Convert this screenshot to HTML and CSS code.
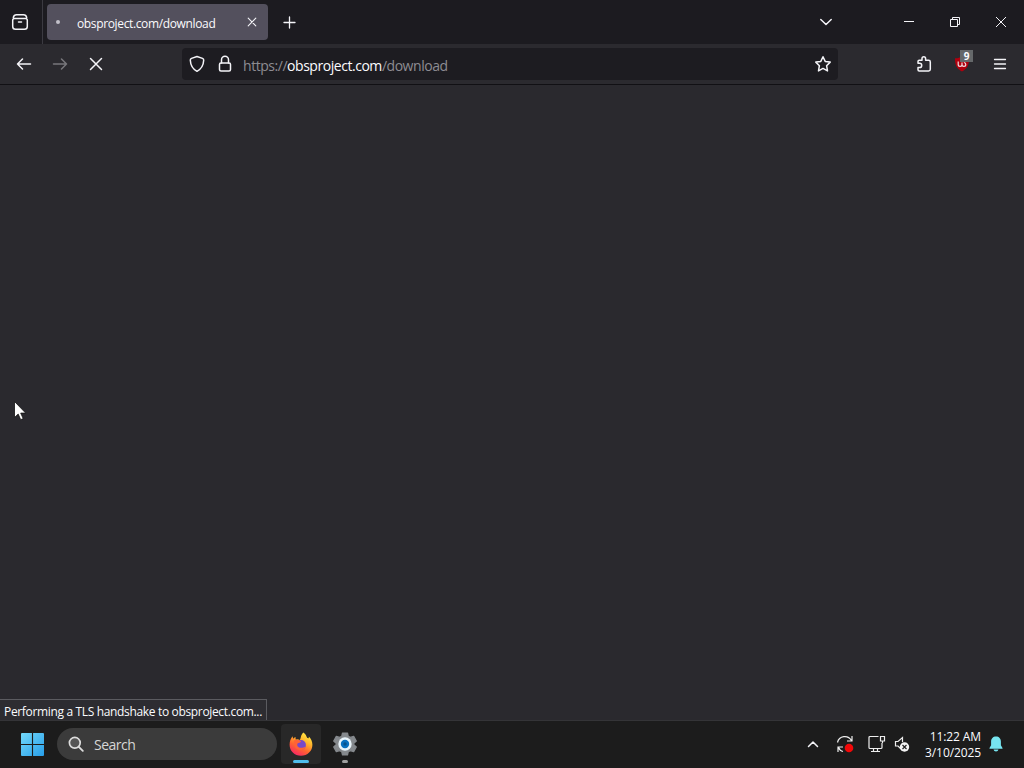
FILE: index.html
```html
<!DOCTYPE html>
<html lang="en">
<head>
<meta charset="utf-8">
<title>obsproject.com/download</title>
<link rel="stylesheet" href="styles.css">
</head>
<body>
<div class="desktop">
  <header class="tabbar">
    <div class="view"><svg width="18" height="18" viewBox="0 0 18 18" class="line"><path d="M2.300 4.500Q3 1.800 5.500 1.800h7q2.500 0 3.200 2.700M3.500 5.500h11a1.800 1.800 0 0 1 1.800 1.800v6.100a2.800 2.800 0 0 1-2.800 2.800h-9a2.800 2.800 0 0 1-2.800-2.800V7.300a1.800 1.800 0 0 1 1.800-1.800zM7.500 9h3"/></svg></div>
    <div class="tab">
      <span class="throbber"></span>
      <span class="tab-title">obsproject.com/download</span>
      <svg width="10" height="10" viewBox="0 0 10 10" class="line tab-close"><path d="M1.200 1.200l7.600 7.600M8.800 1.200L1.200 8.800"/></svg>
    </div>
    <div class="newtab"><svg width="13" height="13" viewBox="0 0 13 13" class="line thin"><path d="M6.500 1v11M1 6.500h11"/></svg></div>
    <div class="window-buttons">
      <div class="alltabs"><svg width="14" height="8" viewBox="0 0 14 8" class="line"><path d="M1.800 1.500L7 6.500l5.200-5"/></svg></div>
      <div class="winbtn"><svg width="10" height="10" viewBox="0 0 10 10" class="line fine"><path d="M0 4.500h10"/></svg></div>
      <div class="winbtn"><svg width="10" height="10" viewBox="0 0 10 10" class="line fine"><path d="M.5 2.500h7v7h-7zM2.500 2.500v-2h7v7h-2"/></svg></div>
      <div class="winbtn"><svg width="12" height="12" viewBox="0 0 12 12" class="line fine"><path d="M1 1l10 10M11 1L1 11"/></svg></div>
    </div>
  </header>
  <nav class="navbar">
    <div class="navbtn"><svg width="16" height="14" viewBox="0 0 16 14" class="line"><path d="M14.500 7H1.500M6.500 2l-5 5 5 5"/></svg></div>
    <div class="navbtn dim"><svg width="16" height="14" viewBox="0 0 16 14" class="line"><path d="M1.500 7h13M9.500 2l5 5-5 5"/></svg></div>
    <div class="navbtn"><svg width="14" height="14" viewBox="0 0 14 14" class="line"><path d="M1.500 1.500l11 11M12.500 1.500l-11 11"/></svg></div>
    <div class="urlbar">
      <svg width="16" height="18" viewBox="0 0 16 18" class="line"><path d="M8 1.500l5.500 1.900q1.300.5 1.200 1.900C14.400 11 12.500 14 8 16.300 3.500 14 1.600 11 1.300 5.300q-.1-1.400 1.200-1.900z"/></svg>
      <svg width="14" height="18" viewBox="0 0 14 18" class="line lock"><rect x="1.500" y="8" width="11" height="8" rx="1.500"/><path d="M3.500 8V4.800a3.500 3.500 0 0 1 7 0V8"/></svg>
      <span class="url">https://<b>obsproject.com</b>/download</span>
      <svg width="18" height="18" viewBox="0 0 18 18" class="line star"><path d="M9 1.700l2.200 4.700 5 .7-3.600 3.600.9 5.200L9 13.400l-4.500 2.500.9-5.200L1.800 7.100l5-.7z"/></svg>
    </div>
    <div class="tools">
      <div class="tool"><svg width="16" height="18" viewBox="0 0 16 18" class="line"><path d="M2 8.300V6.500Q2 5.300 3.200 5.300H6V3.500a1.800 1.800 0 0 1 3.600 0v1.800h3q1.700 0 1.700 1.700v7.300q0 1.700-1.700 1.700H3.200Q2 16 2 14.800v-2.300h1.600a2.100 2.100 0 0 0 0-4.200z"/></svg></div>
      <div class="tool ublock"><svg width="16" height="16" viewBox="0 0 16 16"><path d="M8 0q3 2.300 7 2.300c.2 7-2 10.700-7 13.200C3 13 .8 9.300 1 2.300 4.500 2.300 6 1.500 8 0z" fill="#b0000e"/><path d="M4.200 5.500v3q0 1.900 1.900 1.900T8 8.500v-2m0 2q0 1.900 1.900 1.900t1.900-1.900-1.900-2" fill="none" stroke="#eedfe1" stroke-width="1.200"/></svg><span class="badge">9</span></div>
      <div class="tool"><svg width="14" height="12" viewBox="0 0 14 12" class="line menu"><path d="M1.500 1.500h11M1.500 6h11M1.500 10.500h11"/></svg></div>
    </div>
  </nav>
  <main class="page">
    <svg class="cursor" width="13" height="20" viewBox="0 0 13 20"><path d="M.5.500v16l3.700-3.400 2.500 5.600 2.500-1.100-2.500-5.500h5z" fill="#fff" stroke="#111" stroke-width=".8"/></svg>
    <div class="status"><span>Performing a TLS handshake to obsproject.com...</span></div>
  </main>
  <footer class="taskbar">
    <svg class="start" width="23" height="23" viewBox="0 0 24 24"><defs><linearGradient id="win" x2="1" y2="1"><stop stop-color="#73d9fa"/><stop offset="1" stop-color="#279ee9"/></linearGradient></defs><path fill="url(#win)" d="M0 1q0-1 1-1h10.400v11.400H0zM12.600 0H23q1 0 1 1v10.400H12.600zM0 12.600h11.400V24H1q-1 0-1-1zM12.600 12.600H24V23q0 1-1 1H12.600z"/></svg>
    <div class="search">
      <svg width="16" height="16" viewBox="0 0 16 16"><circle cx="6.800" cy="6.800" r="5.400" fill="#555" stroke="#ddd" stroke-width="1.700"/><path d="M10.800 10.800l4 4" stroke="#ddd" stroke-width="1.900" stroke-linecap="round"/></svg>
      <span class="search-text">Search</span>
    </div>
    <div class="app active">
      <svg width="24" height="24" viewBox="0 0 24 24"><defs><linearGradient id="fx" x1=".8" y1="0" x2=".25" y2="1"><stop stop-color="#fff247"/><stop offset=".35" stop-color="#ffb52c"/><stop offset=".65" stop-color="#ff642f"/><stop offset="1" stop-color="#f52268"/></linearGradient></defs><path fill="url(#fx)" d="M14.300.5c2.500 1.700 3 3.400 3.800 5.300.6.500 1.400.7 1.600.2.200-.4.200-1 .1-1.500 2.300 2.200 3.600 5 3.600 8.200C23.400 19 18.500 23.700 12 23.700S.600 19 .6 12.700c0-3.700 1.100-6.200 3-8.500l.5 2.500Q5 5.500 6.500 5l.2 2.500q2.500-.5 4.200.6c1.300-2.700.7-5 3.400-7.600z"/><circle cx="12" cy="13" r="4.900" fill="#7649c9"/><path d="M4.800 8.500q4-2 7.300.7c-.7 1.500-2.500 1.600-3.600 2.300-.9 2.500.7 4.400 3.800 4.300 2 0 2.800-1.200 4.200-.8-1.300 3-5 4.200-7.800 2.500-3.500-2-4.300-5.600-3.900-9z" fill="#ff6335"/></svg>
      <span class="running"></span>
    </div>
    <div class="app">
      <svg width="24" height="24" viewBox="0 0 24 24"><path fill="#85898d" stroke="#85898d" stroke-width="1.200" stroke-linejoin="round" d="M9.500 1h5l.8 3.300 2 1.100 3.400-1 2.600 4.600-2.500 2.300v1.400l2.500 2.300-2.600 4.600-3.400-1-2 1.100-.8 3.300h-5l-.8-3.300-2-1.100-3.400 1L.7 15l2.500-2.300v-1.400L.7 9l2.600-4.600 3.400 1 2-1.100z"/><circle cx="12" cy="12" r="6.700" fill="#e9f4fa"/><circle cx="12" cy="12" r="4.200" fill="#0870bf"/><circle cx="12" cy="12" r="1.700" fill="#07528d"/></svg>
      <span class="running idle"></span>
    </div>
    <div class="tray">
      <svg width="12" height="8" viewBox="0 0 12 8" class="line"><path d="M1.500 6.500L6 2l4.500 4.500"/></svg>
      <svg class="sync" width="18" height="18" viewBox="0 0 18 18"><path class="stroke" d="M1.500 7.500C3 .5 12-.5 15.500 5.500M16 1v5h-5M7 16.500q-3-.6-4.500-4M2 17v-5h5"/><circle cx="13" cy="13" r="4.300" fill="#f20808"/></svg>
      <svg class="network" width="17" height="18" viewBox="0 0 17 18"><path class="stroke" d="M10.500 1.500H2q-1 0-1 1v10q0 1 1 1h11q1 0 1-1V8M5.500 13.500v3M9.500 13.500v3M3 16.500h9M12.500 1.500h4v4.500h-4zM14.500 6v2"/></svg>
      <svg class="sound" width="16" height="16" viewBox="0 0 16 16"><path class="stroke" d="M7 13L4 10H1.500V5.500H4L8.500 1.500V6"/><circle cx="10.500" cy="11" r="4.700" fill="#f4f4f4"/><path d="M8.500 9l4 4m0-4l-4 4" stroke="#222" stroke-width="1.200"/></svg>
      <div class="clock"><span class="time">11:22 AM</span><span class="date">3/10/2025</span></div>
      <svg class="bell" width="14" height="16" viewBox="0 0 14 16"><path fill="#77e5f0" d="M7 .5c3 0 4.900 2.100 4.900 5v3.700L13.500 12v.8H.5V12l1.600-2.800V5.500C2.100 2.600 4 .5 7 .5zM4.500 13.600h5Q9 15.600 7 15.600t-2.500-2z"/></svg>
    </div>
  </footer>
</div>
</body>
</html>
```
FILE: styles.css
```css
* { box-sizing: border-box; }
body { margin: 0; font-family: "Open Sans", "Noto Sans", sans-serif; color: #fbfbfe; background: #2a292e; }
svg { display: block; flex: none; overflow: visible; }
.line { fill: none; stroke: #f4f4f8; stroke-width: 1.5; stroke-linecap: round; stroke-linejoin: round; }
.thin { stroke-width: 1.3; }
.tab-close { stroke-width: 1.1; }
.menu { stroke-width: 1.3; }
.fine { stroke-width: 1; stroke-linecap: butt; stroke-linejoin: miter; }
.desktop { width: 1024px; height: 768px; display: flex; flex-direction: column; overflow: hidden; }
.tabbar { height: 44px; background: #1c1b20; display: flex; align-items: center; }
.view { width: 43px; height: 44px; padding-left: 11px; border-right: 1px solid #3b3a41; display: flex; align-items: center; }
.tab { width: 221px; height: 36px; margin-left: 4px; padding: 0 11px 0 9px; border-radius: 4px; background: #53505d; display: flex; align-items: center; }
.throbber { width: 4px; height: 4px; border-radius: 2px; background: #c2c0c9; }
.tab-title { margin-left: 17px; padding-top: 2px; flex: 1; font-size: 12px; letter-spacing: -.36px; white-space: nowrap; }
.newtab { width: 43px; display: flex; justify-content: center; padding-top: 1px; }
.window-buttons { margin-left: auto; display: flex; align-items: center; }
.alltabs { margin-right: 53px; }
.winbtn { width: 46px; display: flex; justify-content: center; }
.navbar { height: 41px; padding-left: 6px; background: #2b2a2f; border-bottom: 1px solid #111014; display: flex; align-items: center; }
.navbtn { width: 36px; display: flex; justify-content: center; }
.dim { opacity: .38; }
.urlbar { width: 656px; height: 32px; margin-left: 68px; padding: 0 6px 0 7px; border-radius: 4px; background: #1d1c21; display: flex; align-items: center; }
.lock { margin-left: 13px; }
.url { margin-left: 11px; font-size: 14px; line-height: 20px; padding-top: 3px; color: #8d8c92; letter-spacing: -.46px; white-space: nowrap; }
.url b { color: #fbfbfe; font-weight: 400; }
.star { margin-left: auto; }
.tools { margin-left: 67px; display: flex; align-items: center; }
.tool { width: 38px; display: flex; justify-content: center; }
.ublock { position: relative; }
.badge { position: absolute; left: 17px; top: -6px; width: 13px; height: 12px; background: #65686a; font: 700 10px/12px "Open Sans", sans-serif; text-align: center; }
.page { flex: 1; position: relative; background: #2a292e; display: flex; align-items: flex-end; }
.cursor { position: absolute; left: 14px; top: 316px; }
.status { width: 267px; height: 21px; padding-left: 4px; border: 1px solid #5b5b60; border-left: 0; border-bottom: 0; background: #2d2c31; display: flex; align-items: center; font-size: 12px; white-space: nowrap; }
.status span { padding-top: 2px; letter-spacing: -.34px; }
.taskbar { height: 48px; padding: 0 21px 1px 21px; background: #1c1c1c; border-top: 1px solid #343437; display: flex; align-items: center; }
.search { width: 220px; height: 32px; margin-left: 13px; padding-left: 11px; border-radius: 16px; background: #3b3b3b; display: flex; align-items: center; }
.search-text { margin-left: 10px; font-size: 14px; color: #d6d6d6; letter-spacing: -.5px; }
.app { width: 40px; height: 40px; margin-left: 4px; border-radius: 4px; position: relative; display: flex; align-items: center; justify-content: center; }
.active { background: #282828; }
.running { position: absolute; bottom: 1px; left: 12px; width: 16px; height: 3px; border-radius: 2px; background: #4fbdec; }
.idle { left: 17px; width: 6px; background: #a0a0a0; }
.tray { margin-left: auto; display: flex; align-items: center; }
.stroke { fill: none; stroke: #eee; stroke-width: 1.2; }
.sync { margin-left: 17px; }
.network { margin-left: 14px; }
.sound { margin-left: 9px; }
.clock { width: 71px; display: flex; flex-direction: column; align-items: flex-end; padding-top: 1px; font-size: 12px; line-height: 16px; }
.time { letter-spacing: -.1px; }
.date { letter-spacing: -.1px; }
.bell { margin-left: 8px; }
```
